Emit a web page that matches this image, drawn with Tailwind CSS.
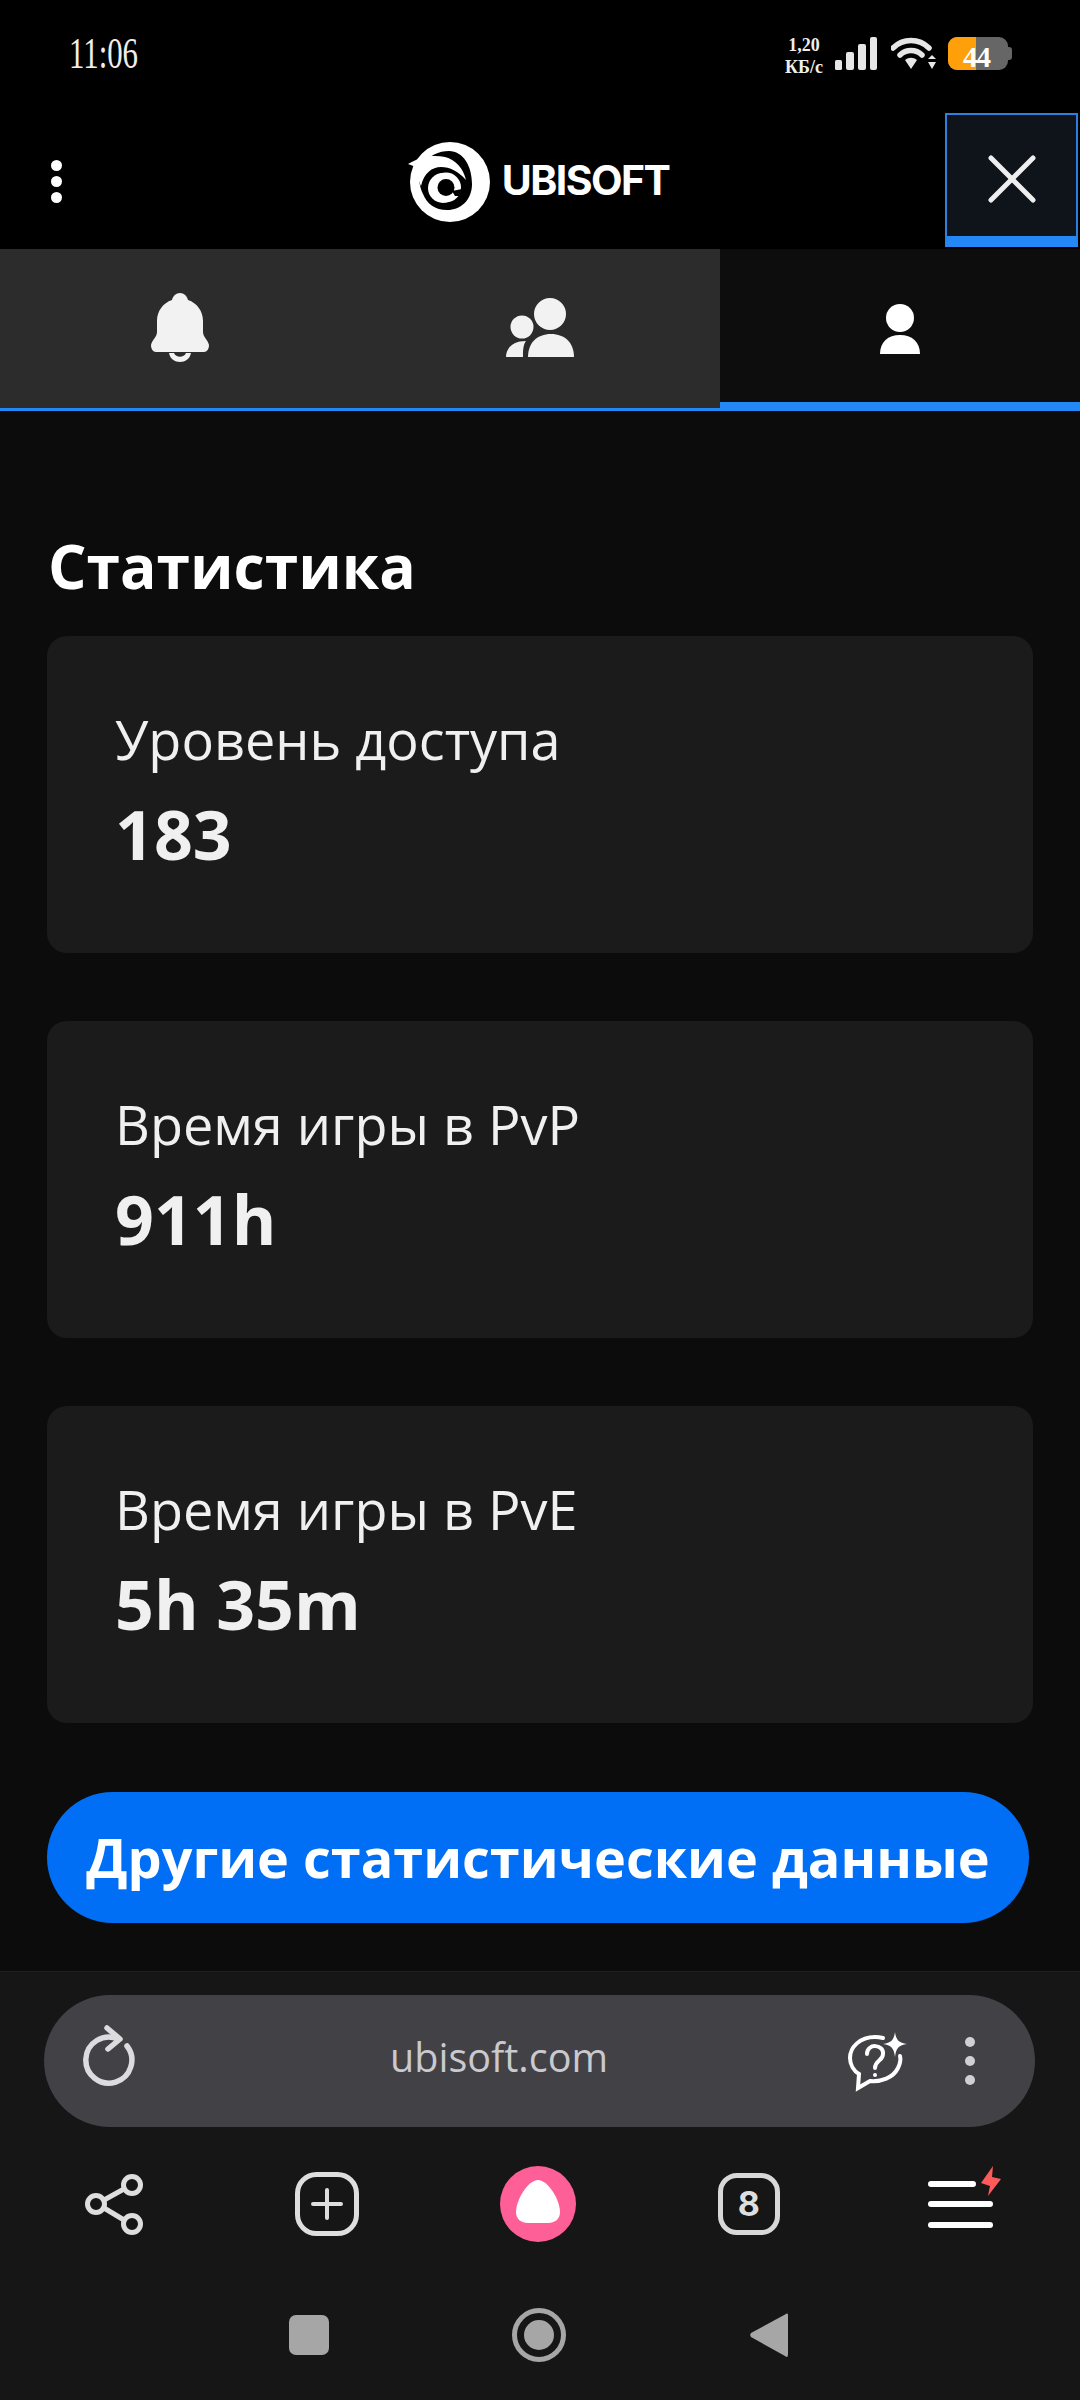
<!DOCTYPE html>
<html lang="ru">
  <head>
    <meta charset="UTF-8" />
    <title>Ubisoft</title>
    <script src="https://cdn.jsdelivr.net/npm/@tailwindcss/browser@4"></script>
  </head>
  <body class="bg-black font-['Open_Sans',sans-serif]">
    <div class="w-[1080px] h-[2400px] flex flex-col overflow-hidden text-white">
      <!-- status bar -->
      <div class="h-[113px] shrink-0 bg-black flex items-start pt-[37px] pl-[69px] pr-[68px]">
        <span class="font-['Liberation_Serif',serif] text-[44px] leading-[34px] text-[#eeeeee] w-[70px] origin-left scale-x-[0.7] whitespace-nowrap">11:06</span>
        <div class="ml-auto flex items-start">
          <div class="font-['Liberation_Serif',serif] font-bold text-[18px] leading-[22px] text-[#eeeeee] text-center -mt-[3px] w-[46px] whitespace-nowrap"><div>1,20</div><div>КБ/с</div></div>
          <svg class="ml-[8px]" width="43" height="33" viewBox="0 0 43 33" fill="#e6e6e6">
            <rect x="0" y="23" width="7" height="10" rx="1.5" />
            <rect x="11" y="15" width="8" height="18" rx="2" />
            <rect x="23" y="7" width="8" height="26" rx="2" />
            <rect x="35" y="0" width="7" height="33" rx="2" />
          </svg>
          <svg class="ml-[13px]" width="46" height="33" viewBox="0 0 46 33" fill="none">
            <path d="M2 11 C12 1 28 1 38 11" stroke="#e6e6e6" stroke-width="5.5" stroke-linecap="round" />
            <path d="M9 18 C15 12 25 12 31 18" stroke="#e6e6e6" stroke-width="5.5" stroke-linecap="round" />
            <path d="M14 23 C18 20 22 20 26 23 L20 32 Z" fill="#e6e6e6" />
            <path d="M37 22 L41 18 L45 22 Z M37 25 L45 25 L41 32 Z" fill="#e6e6e6" />
          </svg>
          <div class="ml-[11px] relative w-[64px] h-[33px]">
            <div class="absolute left-0 top-0 w-[60px] h-[33px] rounded-[9px] bg-[#666666] overflow-hidden">
              <div class="w-[28px] h-full bg-[#ff9f0a]"></div>
            </div>
            <div class="absolute right-0 top-[10px] w-[5px] h-[13px] rounded-r-[3px] bg-[#666666]"></div>
            <span class="absolute left-[15px] top-[4px] font-['Liberation_Serif',serif] font-bold text-[29px] leading-[32px] tracking-[-1px] text-white">44</span>
          </div>
        </div>
      </div>

      <!-- site header -->
      <div class="h-[136px] shrink-0 bg-black relative flex items-center justify-center">
        <div class="absolute left-[51px] top-[47px] flex flex-col gap-[5px]">
          <div class="w-[11px] h-[11px] rounded-full bg-white"></div>
          <div class="w-[11px] h-[11px] rounded-full bg-white"></div>
          <div class="w-[11px] h-[11px] rounded-full bg-white"></div>
        </div>
        <div class="flex items-center gap-[7px] -ml-[8px] -mt-[2px]">
          <svg width="92" height="92" viewBox="0 0 92 92">
            <circle cx="47" cy="48" r="40" fill="#ffffff" />
            <path d="M17 33 C26 21 36 17 46 17 C60 17 69 32 69 50 C69 66 58 76 44 76 C32 76 24 70 20 60 C16 52 15 42 17 33 Z" fill="#000000" />
            <path d="M5 30 C20 21 32 21 42 23 C53 26 60 34 63 46 C55 37 47 33 38 33 C29 33 21 39 18 52 C15 46 14 38 13 33 Z" fill="#ffffff" />
            <circle cx="43" cy="53.5" r="15" fill="#ffffff" />
            <circle cx="40" cy="54" r="15" fill="#ffffff" />
            <circle cx="43" cy="53.5" r="8.5" fill="#000000" />
            <path d="M49 57 L59 55 L56 62 L52 62 Z" fill="#000000" />
          </svg>
          <span class="font-['Inter',sans-serif] font-bold text-[41px] leading-none tracking-[-1.6px]">UBISOFT</span>
        </div>
        <div class="absolute left-[945px] top-0 w-[133px] h-[134px] border-2 border-[#2f7fe0] border-b-[11px] border-b-[#2388f5] bg-[#0f141b] flex items-center justify-center">
          <svg width="48" height="48" viewBox="0 0 48 48" class="mt-[6px]" stroke="#eeeeee" stroke-width="5" stroke-linecap="round">
            <line x1="3" y1="3" x2="45" y2="45" />
            <line x1="45" y1="3" x2="3" y2="45" />
          </svg>
        </div>
      </div>

      <!-- tabs -->
      <div class="h-[162px] shrink-0 grid grid-cols-3 bg-[#0d0d0d]">
        <div class="bg-[#2c2c2c] border-b-[3px] border-[#2388f5] flex justify-center pt-[44px]">
          <svg width="58" height="70" viewBox="0 0 58 70" fill="#f2f2f2">
            <path d="M29 0 C33 0 36 3 37 7 C46 10 52 18 52 28 L52 39 C52 44 57 47 58 52 C58 56 56 59 53 59 L5 59 C2 59 0 56 0 52 C1 47 6 44 6 39 L6 28 C6 18 12 10 21 7 C22 3 25 0 29 0 Z" />
            <path d="M18 60 C20 72 38 72 40 60 L35 60 C33 65 25 65 23 60 Z" />
          </svg>
        </div>
        <div class="bg-[#2c2c2c] border-b-[3px] border-[#2388f5] flex justify-center pt-[49px]">
          <svg width="68" height="59" viewBox="0 0 68 59" fill="#f2f2f2">
            <circle cx="44" cy="16" r="16" />
            <circle cx="16" cy="29" r="11.5" />
            <path d="M22 59 C22 45 31 36 45 36 C59 36 68 45 68 59 Z" />
            <path d="M0 59 C0 50 7 43 20 43 C17 47 17 53 17 59 Z" />
          </svg>
        </div>
        <div class="border-b-[9px] border-[#2388f5] flex justify-center pt-[55px]">
          <svg width="40" height="50" viewBox="0 0 40 50" fill="#ffffff">
            <circle cx="20" cy="14" r="14" />
            <path d="M0 50 C0 38 8 31 20 31 C32 31 40 38 40 50 Z" />
          </svg>
        </div>
      </div>

      <!-- page content -->
      <div class="flex-1 bg-[#0c0c0c] px-[47px] pt-[115px] border-b border-[#1f1f1f]">
        <h2 class="font-bold text-[60.5px] leading-[80px] pl-[1px] mb-[30px]">Статистика</h2>
        <div class="flex flex-col gap-[68px]">
          <div class="w-[986px] h-[317px] rounded-[20px] bg-[#1b1b1c] pl-[68px] pt-[67px]">
            <div class="text-[54px] leading-[72px] text-[#f0f0f0]">Уровень доступа</div>
            <div class="font-bold text-[68px] leading-[92px] mt-[13px] text-[#f0f0f0]">183</div>
          </div>
          <div class="w-[986px] h-[317px] rounded-[20px] bg-[#1b1b1c] pl-[68px] pt-[67px]">
            <div class="text-[54px] leading-[72px] text-[#f0f0f0]">Время игры в PvP</div>
            <div class="font-bold text-[68px] leading-[92px] mt-[13px] text-[#f0f0f0]">911h</div>
          </div>
          <div class="w-[986px] h-[317px] rounded-[20px] bg-[#1b1b1c] pl-[68px] pt-[67px]">
            <div class="text-[54px] leading-[72px] text-[#f0f0f0]">Время игры в PvE</div>
            <div class="font-bold text-[68px] leading-[92px] mt-[13px] text-[#f0f0f0]">5h 35m</div>
          </div>
        </div>
        <div class="mt-[69px] w-[982px] h-[131px] rounded-full bg-[#006ef5] flex items-center justify-center font-bold text-[54px] whitespace-nowrap">Другие статистические данные</div>
      </div>

      <!-- browser bar -->
      <div class="h-[428px] shrink-0 bg-[#161616]">
        <div class="mt-[23px] ml-[44px] w-[991px] h-[132px] rounded-full bg-[#414146] flex items-center relative">
          <svg class="absolute left-[31px] top-[20px]" width="70" height="80" viewBox="0 0 70 80" fill="none" stroke="#dcdcdf" stroke-width="5.5" stroke-linecap="round" stroke-linejoin="round">
            <path d="M52 31 A23 23 0 1 1 43 24" />
            <path d="M32 13 L45 24 L33 34" />
          </svg>
          <span class="absolute left-[345px] top-[30px] w-[220px] text-center text-[39.5px] leading-[64px] text-[#c9c9ce] whitespace-nowrap">ubisoft.com</span>
          <svg class="absolute left-[804px] top-[37px]" width="60" height="60" viewBox="0 0 60 60" fill="none" stroke="#ffffff" stroke-width="4" stroke-linecap="round">
            <path d="M35 6 C31 5 29 5 27 5 C12 5 2 15 2 26 C2 33 6 39 11 42 L10 56 L22 49 C33 50 45 46 50 36 C52 32 53 28 52 24" />
            <path d="M19 22 C19 11 36 12 35 22 C35 29 27 28 27 36" />
            <circle cx="27" cy="43" r="2" fill="#ffffff" stroke="none" />
            <path d="M47 0 C48 8 51 11 59 12 C51 13 48 16 47 25 C46 16 43 13 35 12 C43 11 46 8 47 0 Z" fill="#ffffff" stroke="none" />
          </svg>
          <div class="absolute left-[921px] top-[42px] flex flex-col gap-[9px]">
            <div class="w-[10px] h-[10px] rounded-full bg-[#d0d0d4]"></div>
            <div class="w-[10px] h-[10px] rounded-full bg-[#d0d0d4]"></div>
            <div class="w-[10px] h-[10px] rounded-full bg-[#d0d0d4]"></div>
          </div>
        </div>

        <div class="mt-[37px] h-[80px] pl-[11px] grid grid-cols-5 w-[1065px]">
          <div class="flex justify-center items-center">
            <svg width="64" height="64" viewBox="0 0 64 64" fill="none" stroke="#dedede" stroke-width="5">
              <circle cx="12" cy="32" r="8.5" />
              <circle cx="48" cy="13" r="8.5" />
              <circle cx="48" cy="52" r="8.5" />
              <line x1="20" y1="28" x2="40" y2="17" />
              <line x1="20" y1="36" x2="40" y2="48" />
            </svg>
          </div>
          <div class="flex justify-center items-center">
            <svg width="64" height="64" viewBox="0 0 64 64" fill="none" stroke="#dedede" stroke-linecap="round">
              <rect x="2.5" y="2.5" width="59" height="59" rx="19" stroke-width="5" />
              <path d="M32 18 V46 M18 32 H46" stroke-width="4" />
            </svg>
          </div>
          <div class="flex justify-center items-center">
            <svg width="76" height="76" viewBox="0 0 76 76">
              <circle cx="38" cy="38" r="38" fill="#ff5f97" />
              <path d="M38 14 C48 14 60 34 60 46 C60 53 55 57 48 57 L28 57 C21 57 16 53 16 46 C16 34 28 14 38 14 Z" fill="#ffffff" />
            </svg>
          </div>
          <div class="flex justify-center items-center">
            <div class="w-[62px] h-[62px] rounded-[19px] border-[5px] border-[#d8d8d8] flex items-center justify-center font-['Inter',sans-serif] font-bold text-[34px] leading-none text-[#dedede]">8</div>
          </div>
          <div class="flex justify-center items-center pl-[9px]">
            <svg width="73" height="76" viewBox="0 0 73 76">
              <rect x="0" y="15" width="48" height="6" rx="3" fill="#ffffff" />
              <rect x="0" y="35" width="65" height="6" rx="3" fill="#ffffff" />
              <rect x="0" y="56" width="65" height="6" rx="3" fill="#ffffff" />
              <path d="M65 0 L53 17 L62 20 L60 30 L73 13 L64 11 Z" fill="#ff5a5a" />
            </svg>
          </div>
        </div>

        <div class="mt-[61px] h-[60px] flex items-center">
          <div class="ml-[289px] w-[40px] h-[40px] rounded-[7px] bg-[#a6a6a6]"></div>
          <div class="ml-[183px] w-[54px] h-[54px] rounded-full border-[5px] border-[#a6a6a6] flex items-center justify-center">
            <div class="w-[30px] h-[30px] rounded-full bg-[#a6a6a6]"></div>
          </div>
          <svg class="ml-[184px]" width="38" height="46" viewBox="0 0 38 46"><path d="M36 2 C38 1 38 2 38 4 L38 42 C38 45 37 46 35 44 L1 25 C0 24 0 22 1 21 Z" fill="#a6a6a6" /></svg>
        </div>
      </div>
    </div>
  </body>
</html>
